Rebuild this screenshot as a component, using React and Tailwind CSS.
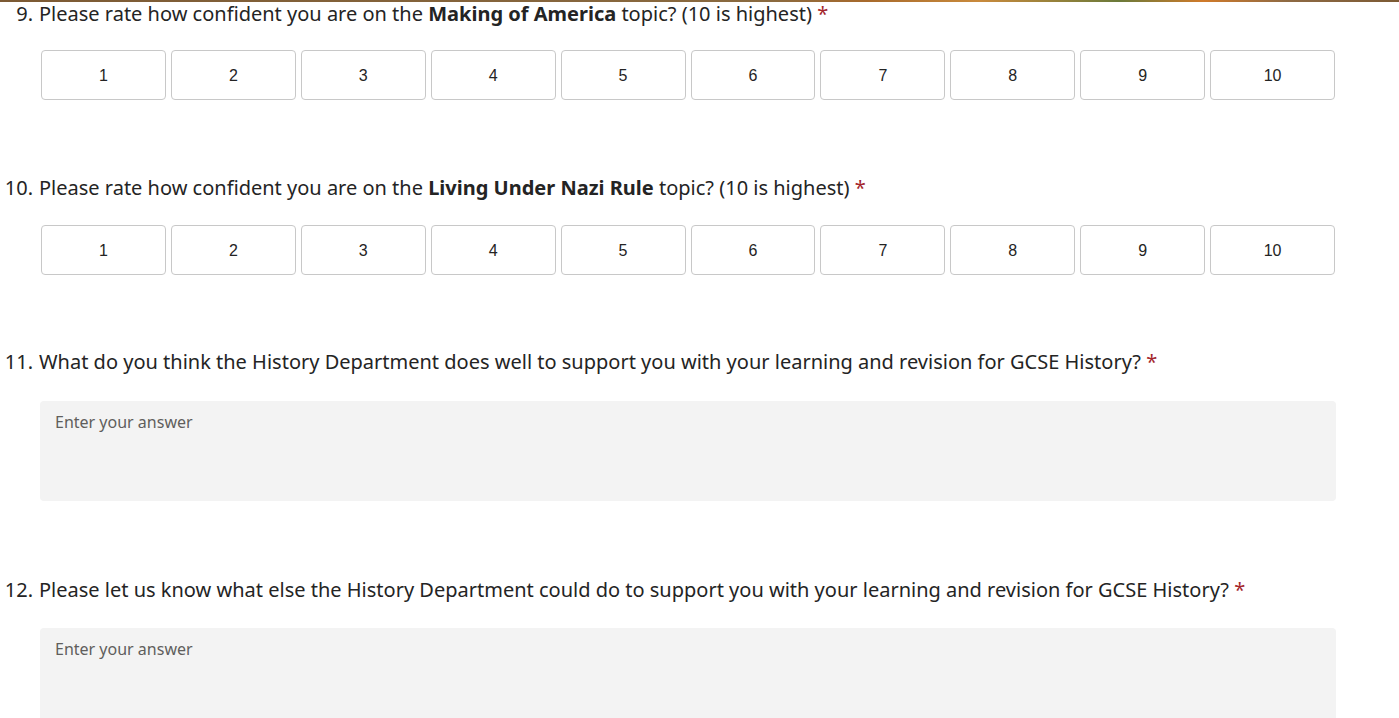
import React from 'react';

const Title = ({ num, children }) => (
    <div className="flex items-baseline text-[20px] leading-[28px] text-[#242424] font-['Segoe_UI','Noto_Sans',sans-serif]">
        <span className="w-[39px] shrink-0 text-right pr-[6px]">{num}.</span>
        <span>
            {children} <span className="text-[#a4262c]">*</span>
        </span>
    </div>
);

const Rating = () => (
    <div className="ml-[41px] w-[1294px] grid grid-cols-10 gap-[5px]">
        {[1, 2, 3, 4, 5, 6, 7, 8, 9, 10].map(n => (
            <button
                key={n}
                className="h-[50px] pt-[2px] rounded-[4px] border border-[#c8c8c8] bg-white text-[16px] text-[#242424] font-['Liberation_Sans',Arial,sans-serif]"
            >
                {n}
            </button>
        ))}
    </div>
);

const Answer = () => (
    <div className="ml-[40px] w-[1296px] h-[100px] rounded-[4px] bg-[#f3f3f3] px-[15px] pt-[9px] text-[16px] text-[#605e5c] font-['Segoe_UI','Noto_Sans',sans-serif]">
        Enter your answer
    </div>
);

export default function App() {
    return (
        <div className="w-[1399px] h-[718px] overflow-hidden bg-white">
            {/* banner image edge */}
            <div className="h-[2px] bg-[linear-gradient(90deg,#7c5a34_0%,#8a6a40_55%,#a86a2c_62%,#c98a3c_70%,#6b7a3a_80%,#d07a2a_86%,#8e6a44_92%,#7c5a34_100%)]" />
            <div className="-mt-[2px]">
                <Title num="9">
                    Please rate how confident you are on the <b>Making of America</b> topic? (10 is highest)
                </Title>
            </div>
            <div className="mt-[22px]"><Rating /></div>

            <div className="mt-[74px]">
                <Title num="10">
                    Please rate how confident you are on the <b>Living Under Nazi Rule</b> topic? (10 is highest)
                </Title>
            </div>
            <div className="mt-[23px]"><Rating /></div>

            <div className="mt-[73px]">
                <Title num="11">
                    What do you think the History Department does well to support you with your learning and revision for GCSE History?
                </Title>
            </div>
            <div className="mt-[25px]"><Answer /></div>

            <div className="mt-[75px]">
                <Title num="12">
                    Please let us know what else the History Department could do to support you with your learning and revision for GCSE History?
                </Title>
            </div>
            <div className="mt-[24px]"><Answer /></div>
        </div>
    );
}
